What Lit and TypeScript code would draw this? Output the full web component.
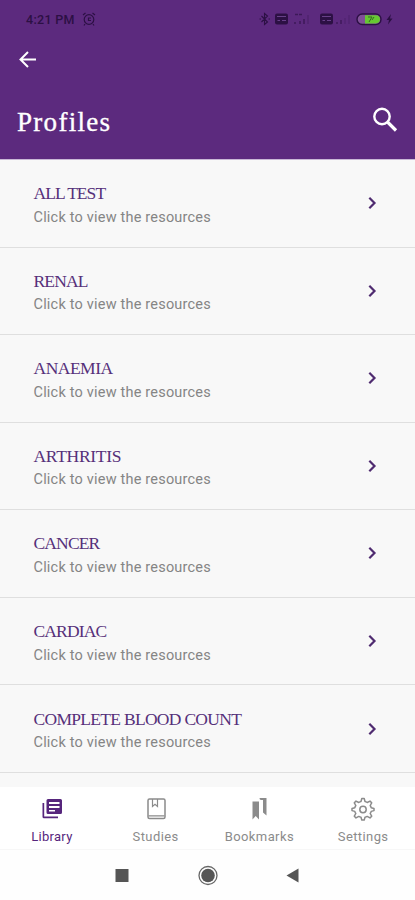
import { LitElement, html, css, svg } from "lit";
import { customElement } from "lit/decorators.js";

const profiles = [
  { name: "ALL TEST", spacing: -0.95 },
  { name: "RENAL", spacing: -0.85 },
  { name: "ANAEMIA", spacing: -0.5 },
  { name: "ARTHRITIS", spacing: -0.3 },
  { name: "CANCER", spacing: -0.85 },
  { name: "CARDIAC", spacing: -0.85 },
  { name: "COMPLETE BLOOD COUNT", spacing: -0.7 },
];

const libraryIcon = svg`<path fill="currentColor" fill-rule="evenodd" d="M8 2H20.500Q22 2 22 3.500V15.500Q22 17 20.500 17H8Q6.500 17 6.500 15.500V3.500Q6.500 2 8 2ZM9 5V7H19.500V5ZM9 9V11H19.500V9ZM9 13V14.500H15V13Z"/><path fill="currentColor" d="M2.500 6H4.200V19.500H18V21.200H4Q2.500 21.200 2.500 19.700Z"/>`;
const studiesIcon = svg`<g fill="none" stroke="currentColor"><rect x="4" y="2" width="17" height="19.500" rx="1.500" stroke-width="1.500"/><path stroke-width="1.200" d="M8.500 2V9.500L11 7.300L13.500 9.500V2M4.500 18.800H20.500"/></g>`;
const bookmarksIcon = svg`<path fill="currentColor" d="M5.500 4.500H12V22.500L8.700 19L5.500 22.500ZM12.500 1H19.500V18.500L16 15.500V3H14Q12.500 3 12.500 1Z"/>`;
const settingsIcon = svg`<g fill="none" stroke="currentColor" stroke-width="1.500" stroke-linejoin="round"><path d="M10.800 1.500H13.200L14 4.500Q15.200 4.800 16.200 5.500L19 4.100L20.700 5.800L19.200 8.500Q19.900 9.600 20.200 10.700L23 11.400V13.600L20.200 14.400Q19.900 15.500 19.200 16.500L20.700 19.200L19 20.900L16.200 19.400Q15.200 20 14 20.300L13.200 23.100H10.800L10 20.300Q8.800 20 7.800 19.400L5 20.900L3.300 19.200L4.800 16.500Q4.100 15.500 3.800 14.400L1 13.600V11.400L3.800 10.700Q4.100 9.600 4.800 8.500L3.300 5.800L5 4.100L7.800 5.500Q8.800 4.800 10 4.500Z"/><circle cx="12" cy="12.500" r="3.200"/></g>`;

const tabs = [
  { label: "Library", icon: libraryIcon, cls: "tab active" },
  { label: "Studies", icon: studiesIcon, cls: "tab" },
  { label: "Bookmarks", icon: bookmarksIcon, cls: "tab" },
  { label: "Settings", icon: settingsIcon, cls: "tab" },
];

@customElement("app-root")
export class AppRoot extends LitElement {
  static styles = css`
    :host { display: flex; flex-direction: column; width: 100%; height: 900px; overflow: hidden; background: #f8f8f8; font-family: Roboto, sans-serif; }
    svg { display: block; flex: none; }
    header { flex: none; box-sizing: border-box; height: 160px; background: #5c2a7e; border-bottom: 1px solid #c9b8d6; color: #fff; display: flex; flex-direction: column; }
    .status { height: 38px; display: flex; align-items: center; justify-content: space-between; padding: 0 18px 0 26px; color: #2c1044; }
    .clock { display: flex; align-items: center; gap: 7px; font-size: 12.500px; font-weight: 500; letter-spacing: .3px; }
    .back { height: 43px; display: flex; align-items: center; padding-left: 16px; }
    .heading { height: 78px; display: flex; align-items: center; justify-content: space-between; padding: 0 15px 0 17px; }
    h1 { margin: 3px 0 0; font: 400 27px/32px "Liberation Serif", serif; letter-spacing: 1.300px; -webkit-text-stroke: .35px #fff; }
    main { flex: 1; min-height: 0; overflow: hidden; }
    .row { box-sizing: border-box; height: 87.550px; border-bottom: 1px solid #dfdfdf; display: flex; align-items: center; justify-content: space-between; padding: 0 33px 0 33.500px; }
    .text { padding-top: 4.500px; }
    .name { font: 400 17.500px/23px "Liberation Serif", serif; padding-bottom: .5px; color: #56307a; }
    .hint { font-size: 14.500px; line-height: 23px; color: #858585; letter-spacing: .2px; }
    nav { flex: none; height: 63px; background: #fff; display: grid; grid-template-columns: repeat(4, 1fr); border-bottom: 1px solid #f7f7f7; box-sizing: border-box; }
    .tab { display: flex; flex-direction: column; align-items: center; padding-top: 10px; color: #8b8b8b; font-size: 13px; line-height: 16px; letter-spacing: .4px; gap: 8px; }
    .active { color: #56257c; letter-spacing: .3px; }
    .system { flex: none; height: 50px; background: #fefefe; display: flex; justify-content: center; }
  `;

  render() {
    return html`
      <header>
        <div class="status">
          <div class="clock">4:21 PM
            <svg width="14" height="14" viewBox="0 0 14 14" fill="none" stroke="currentColor" stroke-width="1.200"><circle cx="7" cy="7.500" r="4.800"/><path d="M1 3L3.500 1M13 3L10.500 1M9 6H6.500V8.500H9M3 12L2 13.500M11 12L12 13.500"/></svg>
          </div>
          <svg width="139" height="16" viewBox="0 0 139 16">
            <path d="M3.500 5L9.500 11L6.500 13.500V2.500L9.500 5L3.500 11M1.500 8H3M10.500 8H12" fill="none" stroke="currentColor" stroke-width="1.100"/>
            <g fill="currentColor"><rect x="17" y="2.500" width="13" height="11" rx="2"/><rect x="62" y="2.500" width="13" height="11" rx="2"/></g>
            <g stroke="#68408a" stroke-width="1"><path d="M19 5.500H28M19.500 9.500H22M24 9.500H28M64 5.500H73M64.500 9.500H67M69 9.500H73"/></g>
            <g stroke="currentColor" stroke-width="1.500"><path opacity=".65" d="M37 3.500H40M41 3.500H44M37 11V13M42 10V13M46 8V13"/><path opacity=".25" d="M50 4V13"/><path opacity=".6" d="M79 11V13M83 9V13"/><path opacity=".2" d="M87 7V13M91 4V13"/></g>
            <rect x="99" y="3" width="24" height="10.500" rx="5.200" fill="#805097" stroke="currentColor" stroke-width="1.400"/><path d="M107 4.200H117.500Q122 4.200 122 8.200T117.500 12.400H107Z" fill="#66c832"/>
            <path d="M110 6H114L111 11M116 6L114 9" fill="none" stroke="#376725"/>
            <path fill="currentColor" d="M133 3L128.500 9H131L130 13.500L134.500 7.500H132Z"/>
          </svg>
        </div>
        <div class="back"><svg width="24" height="24" viewBox="0 0 24 24" fill="none" stroke="#fff" stroke-width="2"><path d="M20 11.500H5.500M12 4L4.500 11.500L12 19"/></svg></div>
        <div class="heading"><h1>Profiles</h1>
          <svg width="30" height="30" viewBox="0 0 30 30" fill="none" stroke="#fff"><circle cx="12" cy="11.500" r="7.700" stroke-width="2.400"/><path stroke-width="3.200" d="M17.500 17L26 25.500"/></svg>
        </div>
      </header>
      <main>
        ${profiles.map((p) => html`<div class="row"><div class="text">
          <div class="name" style="letter-spacing:${p.spacing}px">${p.name}</div>
          <div class="hint">Click to view the resources</div></div>
          <svg width="20" height="20" viewBox="0 0 20 20" fill="none" stroke="#4f2b70" stroke-width="2.200"><path d="M7.300 4.800L12.500 10L7.300 15.200"/></svg>
        </div>`)}
      </main>
      <nav>
        ${tabs.map((t) => html`<div class=${t.cls}><svg width="24" height="24" viewBox="0 0 24 24">${t.icon}</svg><span>${t.label}</span></div>`)}
      </nav>
      <div class="system">
        <svg width="415" height="50" viewBox="0 0 415 50"><g fill="#555"><rect x="115.500" y="19" width="13" height="13"/><circle cx="208" cy="25.500" r="6.800"/><path d="M286.500 25.500L298.500 18.500V32.500Z"/></g><circle cx="208" cy="25.500" r="9" fill="none" stroke="#666" stroke-width="1.300"/></svg>
      </div>
    `;
  }
}
